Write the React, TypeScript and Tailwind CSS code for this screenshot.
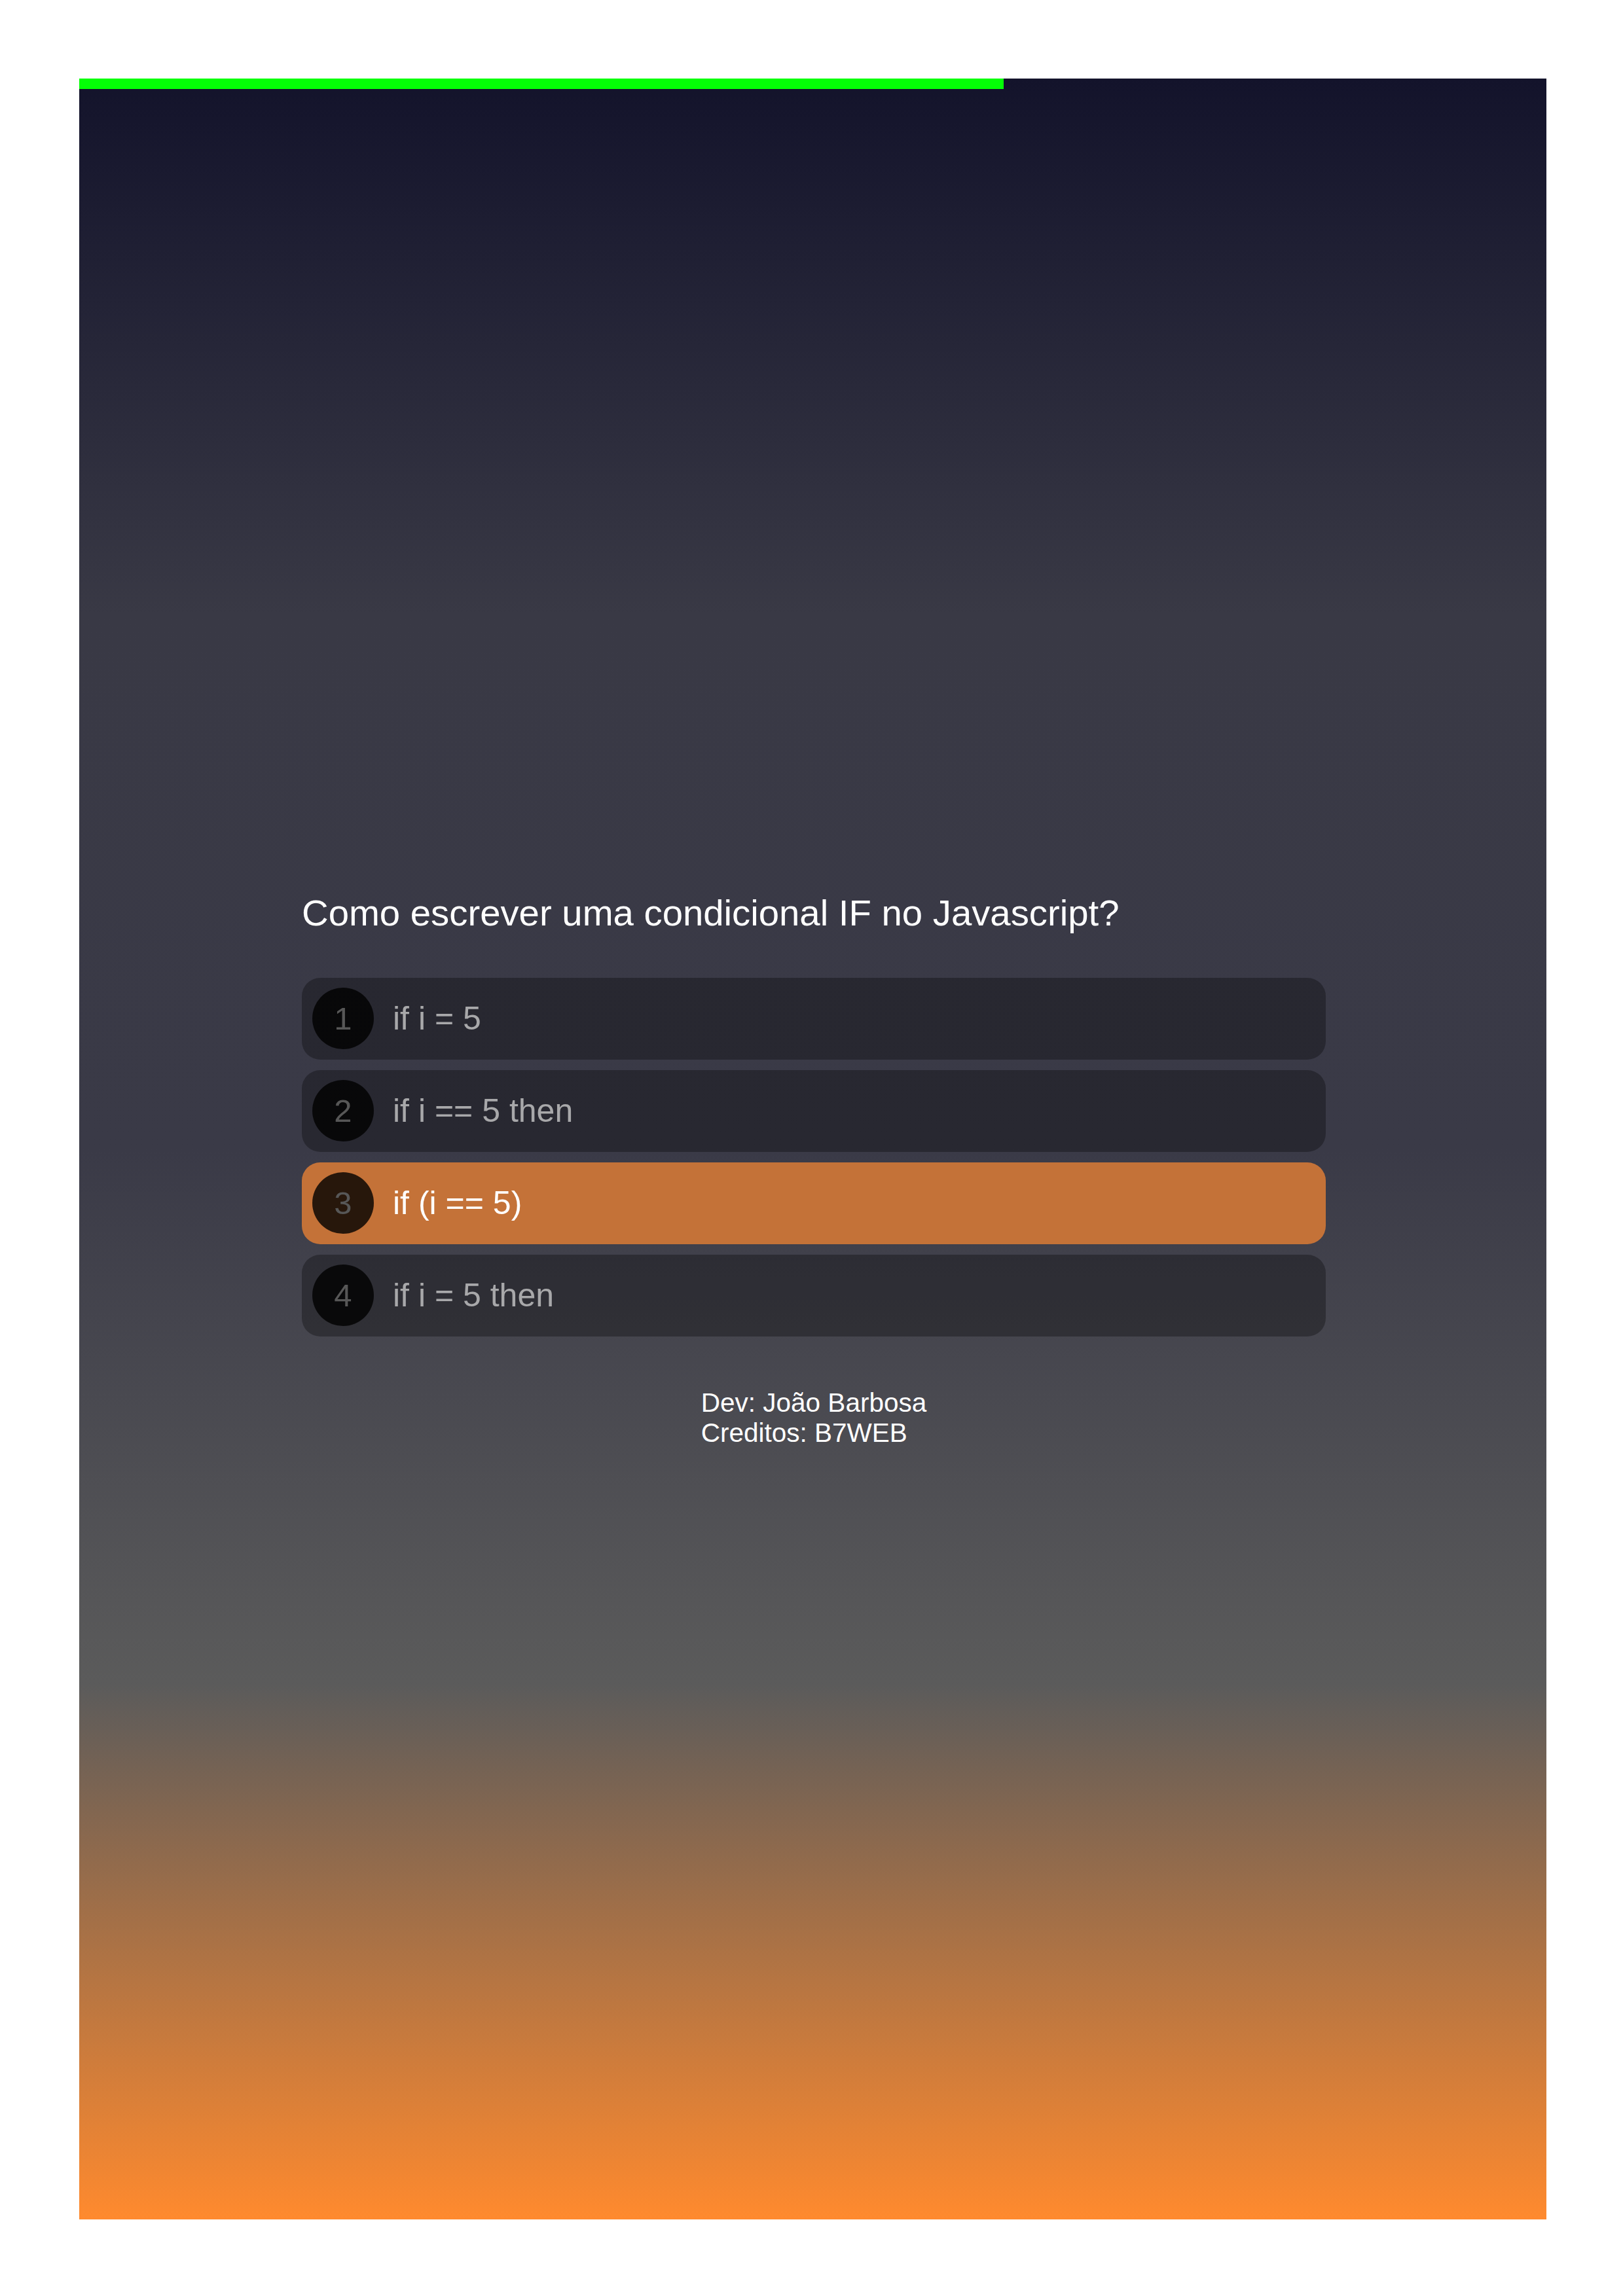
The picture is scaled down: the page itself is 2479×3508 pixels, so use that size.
import React from "react";

const options = [
  { n: 1, text: "if i = 5", selected: false },
  { n: 2, text: "if i == 5 then", selected: false },
  { n: 3, text: "if (i == 5)", selected: true },
  { n: 4, text: "if i = 5 then", selected: false },
];

export default function App() {
  return (
    <div className="min-h-[3508px] w-full bg-white pt-[120px] pl-[121px] font-['Liberation_Sans',Arial,sans-serif]">
      <div className="flex h-[3271px] w-[2241px] flex-col bg-[linear-gradient(180deg,#13132b_0%,#393945_25%,#3a3a47_50%,#5b5b5b_75%,#ff8a2e_100%)]">
        <div className="h-[16px] w-[1412px] bg-[#04ff06]" />
        <div className="ml-[340px] mt-[1227px] flex w-[1564px] flex-col">
          <h1 className="text-[56.3px] font-normal leading-[1.15] text-white">
            Como escrever uma condicional IF no Javascript?
          </h1>
          <div className="mt-[66px] flex flex-col gap-[16px]">
            {options.map((o) => (
              <div
                key={o.n}
                className={
                  o.selected
                    ? "flex h-[125px] items-center rounded-[28px] bg-[#c47238] px-[16px]"
                    : "flex h-[125px] items-center rounded-[28px] bg-black/30 px-[16px]"
                }
              >
                <div className="flex h-[94px] w-[94px] shrink-0 items-center justify-center rounded-full bg-black/80 text-[49px] leading-none text-[#575757]">
                  {o.n}
                </div>
                <div
                  className={
                    o.selected
                      ? "ml-[29px] text-[50px] leading-none text-white"
                      : "ml-[29px] text-[50px] leading-none text-[#a8a8aa]"
                  }
                >
                  {o.text}
                </div>
              </div>
            ))}
          </div>
          <div className="mt-[78px] flex justify-center">
            <div className="text-left text-[40.5px] leading-[1.15] text-white">
              <div>Dev: João Barbosa</div>
              <div>Creditos: B7WEB</div>
            </div>
          </div>
        </div>
      </div>
    </div>
  );
}
